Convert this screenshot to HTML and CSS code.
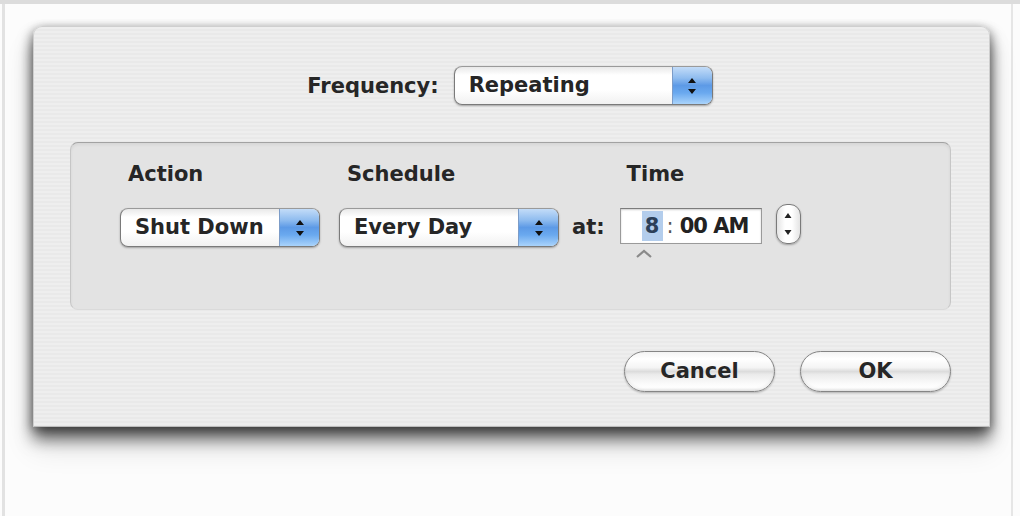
FILE: index.html
```html
<!DOCTYPE html>
<html lang="en">
<head>
<meta charset="utf-8">
<title>Power Schedule</title>
<link rel="stylesheet" href="styles.css">
</head>
<body>
<div class="screen">
  <div class="sheet">
    <div class="freq-row">
      <span class="text">Frequency:</span>
      <div class="popup popup-freq">
        <span class="popup-label">Repeating</span>
        <span class="popup-arrows">
          <svg width="10" height="18" viewBox="0 0 10 18"><path d="M5 1 L9 6 L1 6 Z M5 17 L9 12 L1 12 Z" fill="#111"/></svg>
        </span>
      </div>
    </div>

    <div class="group">
      <div class="col col-action">
        <span class="col-label">Action</span>
        <div class="popup popup-action">
          <span class="popup-label">Shut Down</span>
          <span class="popup-arrows">
            <svg width="10" height="18" viewBox="0 0 10 18"><path d="M5 1 L9 6 L1 6 Z M5 17 L9 12 L1 12 Z" fill="#111"/></svg>
          </span>
        </div>
      </div>
      <div class="col col-schedule">
        <span class="col-label">Schedule</span>
        <div class="popup popup-schedule">
          <span class="popup-label">Every Day</span>
          <span class="popup-arrows">
            <svg width="10" height="18" viewBox="0 0 10 18"><path d="M5 1 L9 6 L1 6 Z M5 17 L9 12 L1 12 Z" fill="#111"/></svg>
          </span>
        </div>
      </div>
      <div class="col col-at">
        <span class="at-label">at:</span>
      </div>
      <div class="col col-time">
        <span class="col-label">Time</span>
        <div class="time-wrap">
          <div class="time-field">
            <span class="hour">8</span>
            <span class="colon">:</span>
            <span class="mins">00 AM</span>
            <svg class="caret" width="20" height="10" viewBox="0 0 20 10"><path d="M3 8 L10 2 L17 8" fill="none" stroke="#8a8a8a" stroke-width="2.2"/></svg>
          </div>
          <div class="stepper">
            <svg width="10" height="28" viewBox="0 0 10 28"><path d="M5 3 L8.5 8 L1.5 8 Z M5 25 L8.5 20 L1.5 20 Z" fill="#222"/></svg>
          </div>
        </div>
      </div>
    </div>

    <div class="buttons">
      <button class="btn">Cancel</button>
      <button class="btn">OK</button>
    </div>
  </div>
</div>
</body>
</html>
```

FILE: styles.css
```css
html, body {
  margin: 0;
  padding: 0;
}
body {
  background: #fcfcfc;
  font-family: "DejaVu Sans", "Liberation Sans", sans-serif;
  font-weight: bold;
  font-size: 21px;
  color: #262626;
}
.screen {
  width: 1020px;
  height: 516px;
  box-sizing: border-box;
  padding: 26px 0 0 33px;
  background:
    linear-gradient(to bottom, #dcdcdc 0 4px, transparent 4px),
    linear-gradient(to right, transparent 0 2px, #e2e2e2 2px 5px, transparent 5px calc(100% - 9px), #e6e6e6 calc(100% - 9px) calc(100% - 7px), transparent calc(100% - 7px)),
    #fcfcfc;
  overflow: hidden;
}
.sheet {
  width: 957px;
  height: 401px;
  box-sizing: border-box;
  border-radius: 9px 9px 0 0;
  border: 1px solid #cfcfcf;
  border-bottom-color: #bdbdbd;
  background:
    repeating-linear-gradient(to bottom, #eeeeee 0 2px, #e9e9e9 2px 4px);
  box-shadow: 0 12px 16px rgba(0, 0, 0, 0.6), 0 20px 30px rgba(0, 0, 0, 0.12), -3px 2px 10px rgba(0, 0, 0, 0.22), 3px 2px 10px rgba(0, 0, 0, 0.22);
  padding-top: 39px;
  display: flex;
  flex-direction: column;
}
.freq-row {
  display: flex;
  justify-content: center;
  align-items: center;
  gap: 15px;
  height: 39px;
  padding-right: 3px;
}
.text {
  line-height: 24px;
}
.popup {
  display: flex;
  box-sizing: border-box;
  height: 39px;
  border: 1px solid #7a7a7a;
  border-top-color: #9a9a9a;
  border-radius: 8px;
  overflow: hidden;
  background: linear-gradient(to bottom, #e9e9e9 0%, #ffffff 22%, #ffffff 62%, #f1f1f1 100%);
  box-shadow: 0 1px 2px rgba(0, 0, 0, 0.3);
}
.popup-label {
  flex: 1;
  display: flex;
  align-items: center;
  padding-left: 14px;
  padding-bottom: 1px;
  color: #262626;
}
.popup-arrows {
  width: 39px;
  display: flex;
  align-items: center;
  justify-content: center;
  border-left: 1px solid #7c9cc8;
  background: linear-gradient(to bottom, #c3dcf8 0%, #8fbcef 30%, #5d9ae6 50%, #6aa9ef 70%, #a9d3fb 100%);
}
.popup-freq {
  width: 259px;
}
.popup-action {
  width: 200px;
}
.popup-schedule {
  width: 220px;
}
.group {
  margin: 37px 38px 0 36px;
  height: 168px;
  box-sizing: border-box;
  border: 1px solid #c6c6c6;
  border-top-color: #a2a2a2;
  border-bottom-color: #dadada;
  border-radius: 8px;
  background: #e3e3e3;
  box-shadow: inset 0 2px 3px rgba(0, 0, 0, 0.06);
  padding: 19px 0 0 50px;
  display: flex;
  align-items: flex-start;
}
.col {
  display: flex;
  flex-direction: column;
  gap: 22px;
}
.col-label {
  line-height: 24px;
  padding-left: 8px;
}
.col-action {
  margin-left: -1px;
}
.col-schedule {
  margin-left: 19px;
}
.col-at {
  margin-left: 13px;
  padding-top: 46px;
}
.at-label {
  line-height: 39px;
}
.col-time {
  margin-left: 15px;
}
.col-time .col-label {
  padding-left: 7px;
}
.time-wrap {
  display: flex;
  align-items: flex-start;
  gap: 14px;
  height: 39px;
}
.time-field {
  position: relative;
  box-sizing: border-box;
  width: 142px;
  height: 36px;
  border: 1px solid #9a9a9a;
  border-top-color: #7c7c7c;
  background: #fff;
  box-shadow: inset 0 1px 2px rgba(0, 0, 0, 0.2);
  display: flex;
  align-items: stretch;
  padding: 2px 0 2px 21px;
  font-size: 21px;
  color: #222;
}
.hour {
  background: #b3cdec;
  color: #2c3f58;
  width: 21px;
  display: flex;
  align-items: center;
  justify-content: center;
}
.colon {
  display: flex;
  align-items: center;
  padding: 0 6px 0 4px;
  font-weight: normal;
  color: #555;
}
.mins {
  display: flex;
  align-items: center;
  letter-spacing: -1px;
}
.caret {
  position: absolute;
  left: 13px;
  top: 40px;
}
.stepper {
  box-sizing: border-box;
  width: 25px;
  height: 40px;
  margin-top: -4px;
  border: 1px solid #7a7a7a;
  border-radius: 11px;
  background: linear-gradient(to right, #e4e4e4 0%, #ffffff 35%, #ffffff 65%, #e4e4e4 100%);
  box-shadow: 0 1px 2px rgba(0, 0, 0, 0.3);
  display: flex;
  align-items: center;
  justify-content: center;
}
.buttons {
  margin-top: 41px;
  padding-right: 38px;
  display: flex;
  justify-content: flex-end;
  gap: 25px;
}
.btn {
  font-family: inherit;
  font-weight: bold;
  font-size: 21px;
  color: #262626;
  width: 151px;
  height: 41px;
  padding: 0 0 2px 0;
  border: 1px solid #858585;
  border-radius: 21px;
  background: linear-gradient(to bottom, #f3f3f3 0%, #ffffff 18%, #f4f4f4 40%, #dcdcdc 50%, #ebebeb 58%, #fafafa 80%, #ffffff 92%, #ededed 100%);
  box-shadow: 0 1px 2px rgba(0, 0, 0, 0.25), inset 0 -2px 3px rgba(0, 0, 0, 0.06);
}
```
